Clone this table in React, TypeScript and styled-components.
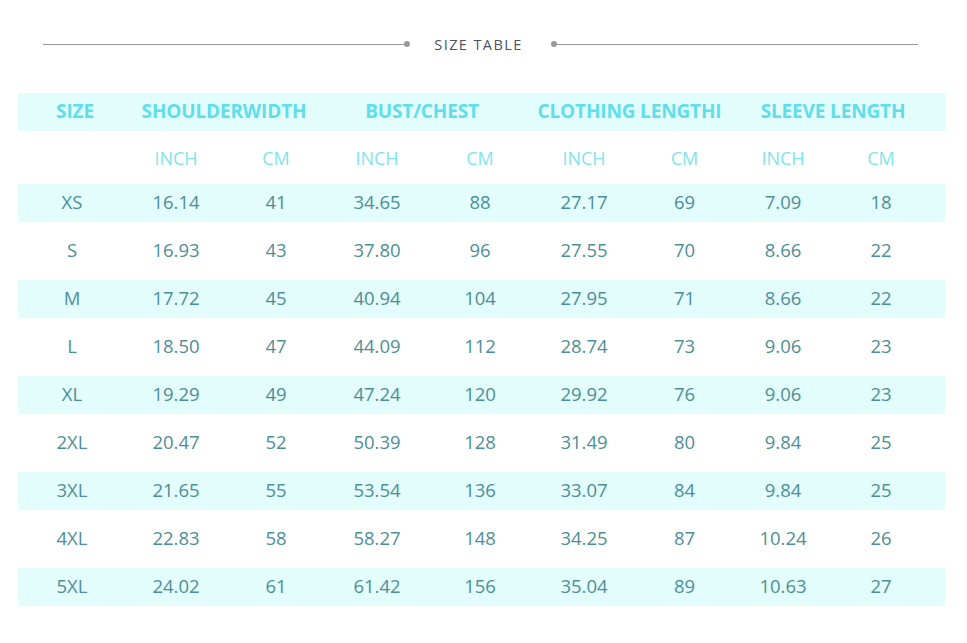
import React from "react";
import styled, { createGlobalStyle } from "styled-components";

const Global = createGlobalStyle`
  html, body { margin: 0; padding: 0; background: #ffffff; }
  body { font-family: "Open Sans", "Noto Sans", sans-serif; }
`;

const COLS = "108px 100px 100px 102px 104px 104px 97px 100px 96px 1fr";

const Page = styled.div`
  width: 967px;
  padding: 34px 22px 0 18px;
  box-sizing: border-box;
`;

const TitleBar = styled.div`
  display: flex;
  align-items: center;
  height: 20px;
  padding: 0 27px 0 25px;
`;

const Line = styled.div`
  flex: 1;
  height: 1px;
  background: #9a9a9a;
`;

const Dot = styled.div`
  width: 6px;
  height: 6px;
  border-radius: 50%;
  background: #9a9a9a;
  flex: none;
`;

const Title = styled.div`
  font-size: 14.5px;
  letter-spacing: 1.4px;
  color: #4b5366;
  margin: 0 28px 0 24px;
  white-space: nowrap;
`;

const Table = styled.div`
  margin-top: 39px;
  display: flex;
  flex-direction: column;
`;

const Row = styled.div<{ $band?: boolean; $h: number }>`
  display: grid;
  grid-template-columns: ${COLS};
  height: ${(p) => p.$h}px;
  align-items: center;
  background: ${(p) => (p.$band ? "#e3fcfc" : "transparent")};
`;

const Body = styled.div`
  display: flex;
  flex-direction: column;
  gap: 10px;
`;

const HeadCell = styled.div<{ $span?: number; $shift?: number }>`
  grid-column: span ${(p) => p.$span ?? 1};
  text-align: center;
  font-weight: 700;
  font-size: 19px;
  color: #5fdfea;
  letter-spacing: -0.15px;
  white-space: nowrap;
  transform: translate(${(p) => p.$shift ?? 0}px, -1px);
`;

const UnitCell = styled.div`
  text-align: center;
  font-size: 18px;
  color: #80e4ec;
`;

const Cell = styled.div`
  text-align: center;
  font-size: 18.5px;
  color: #4d8f98;
  transform: translateY(-2px);
`;

const rows: string[][] = [
  ["XS", "16.14", "41", "34.65", "88", "27.17", "69", "7.09", "18"],
  ["S", "16.93", "43", "37.80", "96", "27.55", "70", "8.66", "22"],
  ["M", "17.72", "45", "40.94", "104", "27.95", "71", "8.66", "22"],
  ["L", "18.50", "47", "44.09", "112", "28.74", "73", "9.06", "23"],
  ["XL", "19.29", "49", "47.24", "120", "29.92", "76", "9.06", "23"],
  ["2XL", "20.47", "52", "50.39", "128", "31.49", "80", "9.84", "25"],
  ["3XL", "21.65", "55", "53.54", "136", "33.07", "84", "9.84", "25"],
  ["4XL", "22.83", "58", "58.27", "148", "34.25", "87", "10.24", "26"],
  ["5XL", "24.02", "61", "61.42", "156", "35.04", "89", "10.63", "27"],
];

export default function App() {
  return (
    <>
      <Global />
      <Page>
        <TitleBar>
          <Line />
          <Dot />
          <Title>SIZE TABLE</Title>
          <Dot />
          <Line />
        </TitleBar>
        <Table>
          <Row $band $h={38}>
            <HeadCell $shift={3}>SIZE</HeadCell>
            <HeadCell $span={2} $shift={-2}>SHOULDERWIDTH</HeadCell>
            <HeadCell $span={2} $shift={-7}>BUST/CHEST</HeadCell>
            <HeadCell $span={2} $shift={-3}>CLOTHING LENGTHI</HeadCell>
            <HeadCell $span={2} $shift={2}>SLEEVE LENGTH</HeadCell>
          </Row>
          <Row $h={53}>
            <div />
            {["INCH", "CM", "INCH", "CM", "INCH", "CM", "INCH", "CM"].map((u, i) => (
              <UnitCell key={i}>{u}</UnitCell>
            ))}
          </Row>
          <Body>
            {rows.map((r, i) => (
              <Row key={r[0]} $band={i % 2 === 0} $h={38}>
                {r.map((c, j) => (
                  <Cell key={j}>{c}</Cell>
                ))}
              </Row>
            ))}
          </Body>
        </Table>
      </Page>
    </>
  );
}
